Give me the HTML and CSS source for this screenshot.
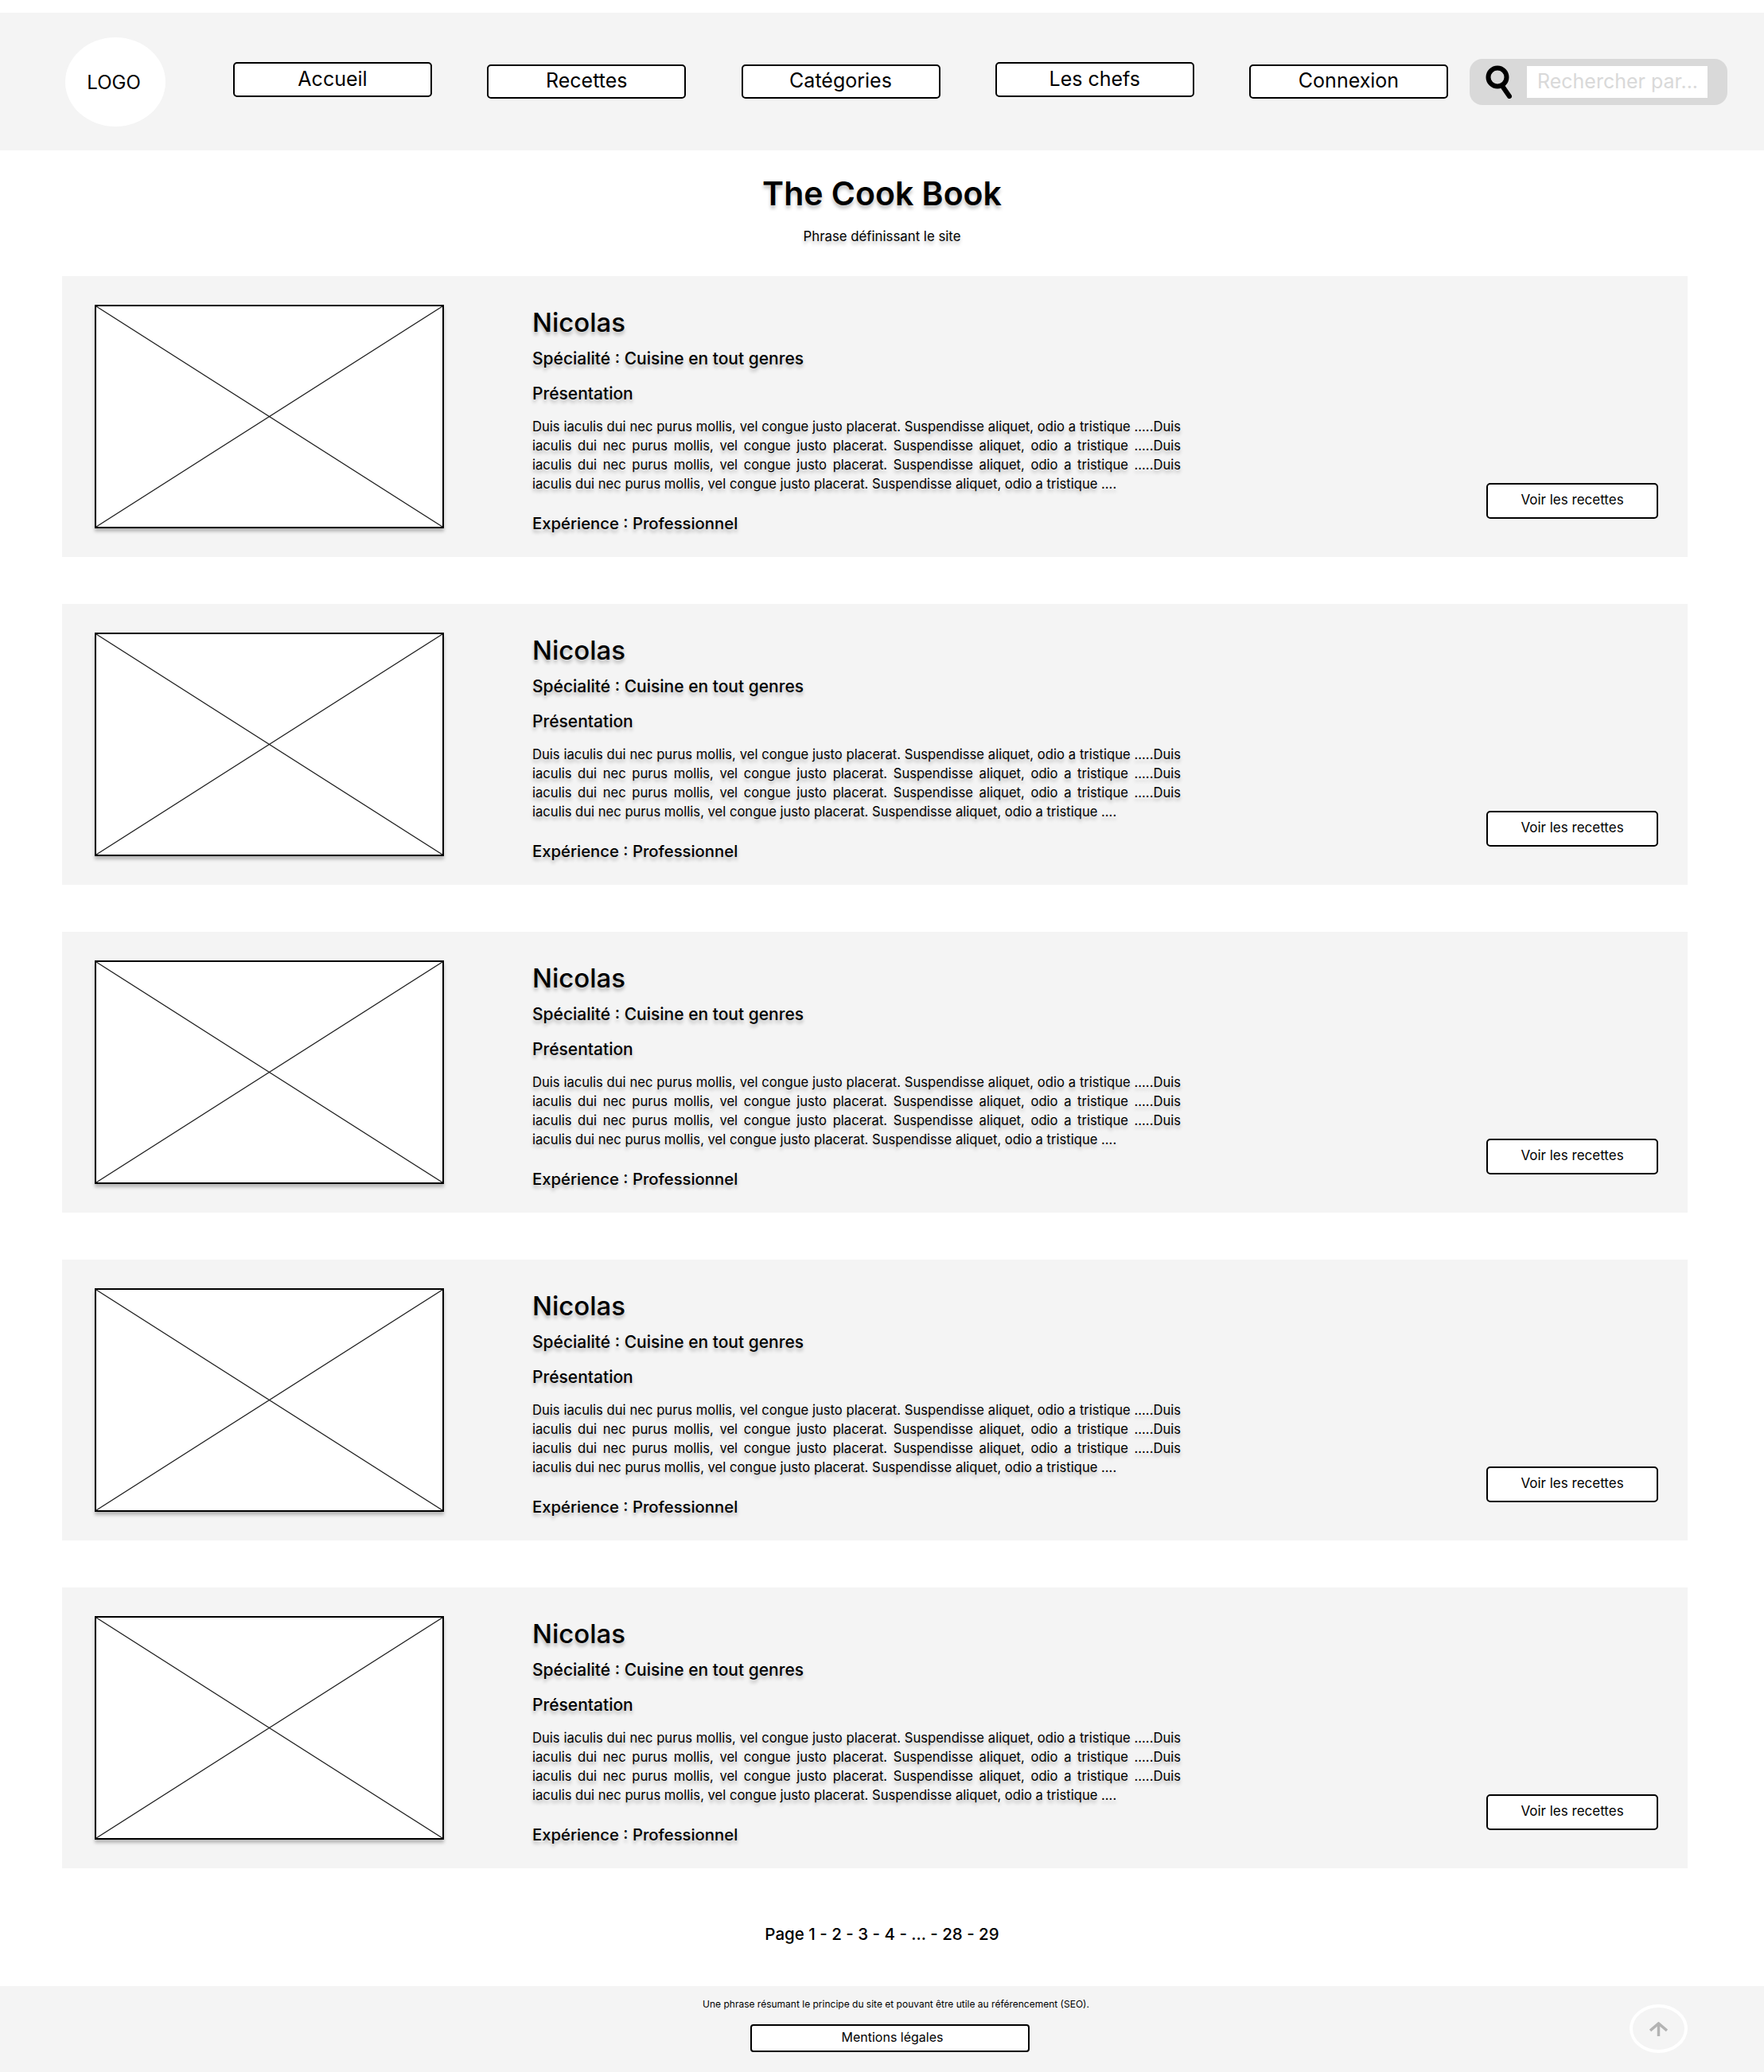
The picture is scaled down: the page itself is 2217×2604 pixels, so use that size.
FILE: index.html
```html
<!DOCTYPE html>
<html lang="fr">
<head>
  <meta charset="UTF-8">
  <title>The Cook Book</title>
  <link rel="stylesheet" href="styles.css">
</head>
<body>
  <header class="site-header">
    <div class="logo">LOGO</div>
    <nav class="main-nav">
      <a class="nav-btn nav-btn-high">Accueil</a>
      <a class="nav-btn">Recettes</a>
      <a class="nav-btn">Catégories</a>
      <a class="nav-btn nav-btn-high">Les chefs</a>
      <a class="nav-btn">Connexion</a>
    </nav>
    <div class="search">
      <svg class="search-icon" viewBox="0 0 36 42" width="36" height="42">
        <circle cx="15" cy="15" r="11.5" fill="none" stroke="#000" stroke-width="6"/>
        <path d="M21 26 L30 39" fill="none" stroke="#000" stroke-width="6" stroke-linecap="round"/>
      </svg>
      <div class="search-input">Rechercher par...</div>
    </div>
  </header>

  <div class="page-title">
    <h1>The Cook Book</h1>
    <p>Phrase définissant le site</p>
  </div>

  <main class="chefs">
    <article class="chef">
      <svg class="chef-img" viewBox="0 0 439 281" preserveAspectRatio="none">
        <path d="M0 0 L439 281 M439 0 L0 281" stroke="#222" stroke-width="1.3"/>
      </svg>
      <div class="chef-info">
        <h2>Nicolas</h2>
        <h3 class="chef-spec">Spécialité : Cuisine en tout genres</h3>
        <h4>Présentation</h4>
        <p>Duis iaculis dui nec purus mollis, vel congue justo placerat. Suspendisse aliquet, odio a tristique .....Duis iaculis dui nec purus mollis, vel congue justo placerat. Suspendisse aliquet, odio a tristique .....Duis iaculis dui nec purus mollis, vel congue justo placerat. Suspendisse aliquet, odio a tristique .....Duis iaculis dui nec purus mollis, vel congue justo placerat. Suspendisse aliquet, odio a tristique ....</p>
        <h3 class="chef-exp">Expérience : Professionnel</h3>
      </div>
      <a class="chef-btn">Voir les recettes</a>
    </article>

    <article class="chef">
      <svg class="chef-img" viewBox="0 0 439 281" preserveAspectRatio="none">
        <path d="M0 0 L439 281 M439 0 L0 281" stroke="#222" stroke-width="1.3"/>
      </svg>
      <div class="chef-info">
        <h2>Nicolas</h2>
        <h3 class="chef-spec">Spécialité : Cuisine en tout genres</h3>
        <h4>Présentation</h4>
        <p>Duis iaculis dui nec purus mollis, vel congue justo placerat. Suspendisse aliquet, odio a tristique .....Duis iaculis dui nec purus mollis, vel congue justo placerat. Suspendisse aliquet, odio a tristique .....Duis iaculis dui nec purus mollis, vel congue justo placerat. Suspendisse aliquet, odio a tristique .....Duis iaculis dui nec purus mollis, vel congue justo placerat. Suspendisse aliquet, odio a tristique ....</p>
        <h3 class="chef-exp">Expérience : Professionnel</h3>
      </div>
      <a class="chef-btn">Voir les recettes</a>
    </article>

    <article class="chef">
      <svg class="chef-img" viewBox="0 0 439 281" preserveAspectRatio="none">
        <path d="M0 0 L439 281 M439 0 L0 281" stroke="#222" stroke-width="1.3"/>
      </svg>
      <div class="chef-info">
        <h2>Nicolas</h2>
        <h3 class="chef-spec">Spécialité : Cuisine en tout genres</h3>
        <h4>Présentation</h4>
        <p>Duis iaculis dui nec purus mollis, vel congue justo placerat. Suspendisse aliquet, odio a tristique .....Duis iaculis dui nec purus mollis, vel congue justo placerat. Suspendisse aliquet, odio a tristique .....Duis iaculis dui nec purus mollis, vel congue justo placerat. Suspendisse aliquet, odio a tristique .....Duis iaculis dui nec purus mollis, vel congue justo placerat. Suspendisse aliquet, odio a tristique ....</p>
        <h3 class="chef-exp">Expérience : Professionnel</h3>
      </div>
      <a class="chef-btn">Voir les recettes</a>
    </article>

    <article class="chef">
      <svg class="chef-img" viewBox="0 0 439 281" preserveAspectRatio="none">
        <path d="M0 0 L439 281 M439 0 L0 281" stroke="#222" stroke-width="1.3"/>
      </svg>
      <div class="chef-info">
        <h2>Nicolas</h2>
        <h3 class="chef-spec">Spécialité : Cuisine en tout genres</h3>
        <h4>Présentation</h4>
        <p>Duis iaculis dui nec purus mollis, vel congue justo placerat. Suspendisse aliquet, odio a tristique .....Duis iaculis dui nec purus mollis, vel congue justo placerat. Suspendisse aliquet, odio a tristique .....Duis iaculis dui nec purus mollis, vel congue justo placerat. Suspendisse aliquet, odio a tristique .....Duis iaculis dui nec purus mollis, vel congue justo placerat. Suspendisse aliquet, odio a tristique ....</p>
        <h3 class="chef-exp">Expérience : Professionnel</h3>
      </div>
      <a class="chef-btn">Voir les recettes</a>
    </article>

    <article class="chef">
      <svg class="chef-img" viewBox="0 0 439 281" preserveAspectRatio="none">
        <path d="M0 0 L439 281 M439 0 L0 281" stroke="#222" stroke-width="1.3"/>
      </svg>
      <div class="chef-info">
        <h2>Nicolas</h2>
        <h3 class="chef-spec">Spécialité : Cuisine en tout genres</h3>
        <h4>Présentation</h4>
        <p>Duis iaculis dui nec purus mollis, vel congue justo placerat. Suspendisse aliquet, odio a tristique .....Duis iaculis dui nec purus mollis, vel congue justo placerat. Suspendisse aliquet, odio a tristique .....Duis iaculis dui nec purus mollis, vel congue justo placerat. Suspendisse aliquet, odio a tristique .....Duis iaculis dui nec purus mollis, vel congue justo placerat. Suspendisse aliquet, odio a tristique ....</p>
        <h3 class="chef-exp">Expérience : Professionnel</h3>
      </div>
      <a class="chef-btn">Voir les recettes</a>
    </article>
  </main>

  <div class="pager">Page 1 - 2 - 3 - 4 - ... - 28 - 29</div>

  <footer class="site-footer">
    <p>Une phrase résumant le principe du site et pouvant être utile au référencement (SEO).</p>
    <a class="legal-btn">Mentions légales</a>
    <div class="to-top">
      <svg viewBox="0 0 23 18" width="23" height="18">
        <path d="M11.5 18 V2 M1 11 L11.5 2 L22 11" fill="none" stroke="#b3b3b3" stroke-width="3.5"/>
      </svg>
    </div>
  </footer>
</body>
</html>
```

FILE: styles.css
```css
* {
  box-sizing: border-box;
}
body {
  margin: 0;
  padding-top: 16px;
  background-color: #fff;
  color: #000;
  font-family: Inter, "Liberation Sans", sans-serif;
}
h1, h2, h3, h4, p {
  margin: 0;
}

/* header */
.site-header {
  display: flex;
  align-items: center;
  height: 173px;
  padding-left: 82px;
  background-color: #f4f4f4;
}
.logo {
  display: flex;
  align-items: center;
  justify-content: center;
  width: 126px;
  height: 112px;
  margin-right: 85px;
  padding: 2px 4px 0 0;
  border-radius: 50%;
  background-color: #fff;
  font-size: 24px;
}
.main-nav {
  display: flex;
  gap: 69.25px;
  margin-right: 27px;
}
.nav-btn {
  display: flex;
  align-items: center;
  justify-content: center;
  width: 250px;
  height: 43px;
  padding-bottom: 3px;
  border: 2px solid #000;
  border-radius: 5px;
  background-color: #fff;
  font-size: 25px;
}
.nav-btn-high {
  height: 44px;
  margin-top: -3px;
}
.search {
  display: flex;
  align-items: center;
  justify-content: space-between;
  width: 324px;
  height: 58px;
  padding: 0 25px 0 20px;
  border-radius: 16px;
  background-color: #d9d9d9;
}
.search-icon {
  flex-shrink: 0;
}
.search-input {
  width: 227px;
  height: 40px;
  padding-left: 13px;
  background-color: #fff;
  color: #d9d9d9;
  font-size: 25px;
  line-height: 38px;
  white-space: nowrap;
}

/* title */
.page-title {
  padding-top: 29px;
  text-align: center;
}
.page-title h1 {
  font-size: 41px;
  font-weight: 600;
  line-height: 50px;
  text-shadow: 0 4px 4px rgba(0,0,0,0.25);
}
.page-title p {
  margin-top: 17px;
  font-size: 16.8px;
  line-height: 24px;
  text-shadow: 0 4px 4px rgba(0,0,0,0.25);
}

/* chefs list */
.chefs {
  display: flex;
  flex-direction: column;
  gap: 59px;
  margin: 38px 96px 0 78px;
}
.chef {
  display: flex;
  position: relative;
  height: 353px;
  padding: 36px 0 0 41px;
  background-color: #f4f4f4;
}
.chef-img {
  flex-shrink: 0;
  width: 439px;
  height: 281px;
  margin-right: 111px;
  border: 2px solid #000;
  background-color: #fff;
  box-shadow: 0 4px 4px rgba(0,0,0,0.25);
}
.chef-info {
  width: 815px;
  text-shadow: 0 4px 4px rgba(0,0,0,0.25);
}
.chef-info h2 {
  margin-top: -2px;
  font-size: 33px;
  font-weight: 500;
  line-height: 48px;
}
.chef-spec {
  margin-top: 7px;
  font-size: 21px;
  font-weight: 500;
  line-height: 30px;
}
.chef-info h4 {
  margin-top: 14px;
  font-size: 21px;
  font-weight: 500;
  line-height: 30px;
}
.chef-info p {
  margin-top: 14px;
  font-size: 16.6px;
  line-height: 24px;
  text-align: justify;
}
.chef-exp {
  margin-top: 23px;
  font-size: 20.3px;
  font-weight: 500;
  line-height: 30px;
}
.chef-btn {
  position: absolute;
  right: 37px;
  bottom: 48px;
  display: flex;
  align-items: center;
  justify-content: center;
  width: 216px;
  height: 45px;
  padding-bottom: 4px;
  border: 2px solid #000;
  border-radius: 5px;
  background-color: #fff;
  font-size: 17px;
}

/* pager + footer */
.pager {
  margin-top: 66px;
  font-size: 20.5px;
  font-weight: 500;
  line-height: 33px;
  text-align: center;
}
.site-footer {
  display: flex;
  flex-direction: column;
  align-items: center;
  position: relative;
  height: 109px;
  margin-top: 49px;
  padding: 14px 0 0 20px;
  background-color: #f4f4f4;
}
.site-footer p {
  margin-left: 15px;
  font-size: 12px;
  line-height: 18px;
}
.legal-btn {
  display: flex;
  align-items: center;
  justify-content: center;
  width: 351px;
  height: 35px;
  margin-top: 16px;
  padding: 0 0 3px 6px;
  border: 2px solid #000;
  border-radius: 4px;
  background-color: #fff;
  font-size: 16px;
}
.to-top {
  position: absolute;
  top: 23px;
  right: 96px;
  display: flex;
  align-items: center;
  justify-content: center;
  width: 73px;
  height: 61px;
  border: 4px solid #fff;
  border-radius: 50%;
}
```
